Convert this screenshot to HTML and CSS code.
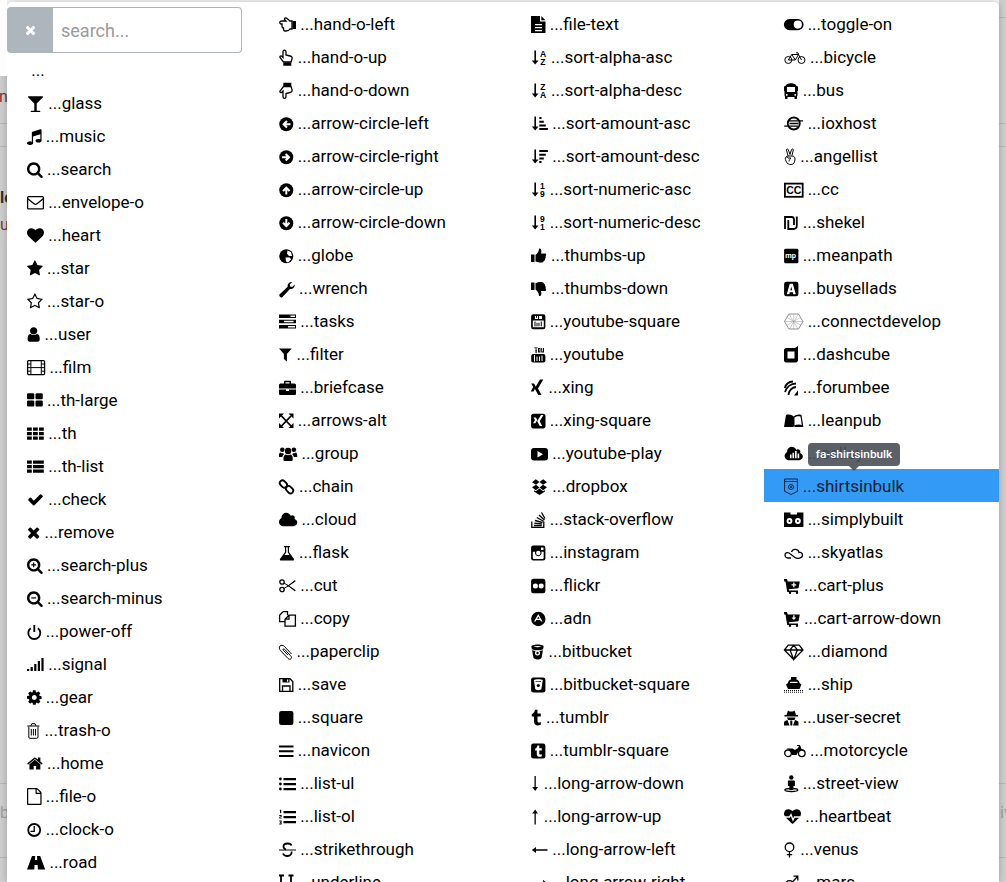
FILE: index.html
```html
<!DOCTYPE html>
<html lang="en">
<head>
  <meta charset="UTF-8" />
  <title>Icon picker</title>
  <link rel="stylesheet" href="styles.css">
</head>
<body>
  <svg class="defs">
    <defs>
      <path id="p-search" d="M1216 832q0-185-131.500-316.500t-316.500-131.500-316.500 131.500-131.500 316.500 131.500 316.500 316.500 131.500 316.500-131.500 131.500-316.500zm512 832q0 52-38 90t-90 38q-54 0-90-38l-343-342q-179 124-399 124-143 0-273.500-55.500t-225-150-150-225-55.500-273.500 55.500-273.500 150-225 225-150 273.500-55.500 273.500 55.500 225 150 150 225 55.500 273.500q0 220-124 399l343 343q37 37 37 90z"/>
      <path id="p-times" d="M1490 1322q0 40-28 68l-136 136q-28 28-68 28t-68-28l-294-294-294 294q-28 28-68 28t-68-28l-136-136q-28-28-28-68t28-68l294-294-294-294q-28-28-28-68t28-68l136-136q28-28 68-28t68 28l294 294 294-294q28-28 68-28t68 28l136 136q28 28 28 68t-28 68l-294 294 294 294q28 28 28 68z"/>
      <path id="p-cloud" d="M1920 1216q0 159-112.500 271.500t-271.500 112.500h-1088q-185 0-316.500-131.500t-131.500-316.500q0-132 71-241.500t187-163.500q-2-28-2-43 0-212 150-362t362-150q158 0 286.500 88t187.500 230q70-62 166-62 106 0 181 75t75 181q0 75-41 138 129 30 213 134.500t84 239.500z"/>
      <path id="p-heart" d="M896 1664q-26 0-44-18l-624-602q-10-8-27.500-26t-55.500-65.500-68-97.500-53.500-121-23.500-138q0-220 127-344t351-124q62 0 126.500 21.500t120 58 95.500 68.500 76 68q36-36 76-68t95.500-68.500 120-58 126.500-21.500q224 0 351 124t127 344q0 221-229 450l-623 600q-18 18-44 18z"/>
      <path id="p-arrow" d="M3.200 9.300l4-4 1.500 1.500-1.500 1.500h4.300v2h-4.300l1.500 1.500-1.500 1.500z"/>
      <path id="p-hand" d="M5 1.200c1-.4 2 .3 2 1.800v3l4 1c2 .5 2.500 1.500 2 3l-1 3h-7.500l-3.500-4.500c-.5-1 .5-2 1.500-1.500l1.500 1.500v-5.500c0-1 .3-1.500 1-1.800z"/>
      <path id="p-thumb" d="M4.500 8c2-1.500 3.500-3.500 3.500-6.500 2-.5 3 1.500 2 5h4c1.500 0 1.500 2 .5 2.500.5 1.500 0 2.500-.5 3 0 1.500-1 2-1.500 2.500-.5 1-1.500 1-2.500 1-2 0-4-.5-5.500-1zM0 7.500h3.500v7.500h-3.500z"/>
      <path id="p-sortarrow" d="M3.400 1.500h1.600v10h2.500l-3.300 4-3.400-4h2.600z"/>
      <g id="p-cart">
        <path d="M0 2h3l.7 2.500h12.100l-1.300 6.700-9.700 1 .2 1.300h9v1.500h-10.800l-1.700-10.500h-1.300z"/>
        <circle cx="6" cy="15.800" r="1.200"/>
        <circle cx="13" cy="15.800" r="1.200"/>
      </g>
    </defs>
  </svg>

  <div class="side side-left">
    <div class="side-white"></div>
    <p class="crumb crumb-n">n</p>
    <hr class="rule rule-a">
    <hr class="rule rule-b">
    <p class="head">le</p>
    <p class="crumb crumb-u">u</p>
    <hr class="rule rule-c">
    <p class="note">b</p>
    <hr class="rule rule-d">
  </div>

  <div class="stage">
    <div class="panel">
      <ul class="col">
        <li class="search">
          <button class="clear" type="button"><svg class="clear-x" viewBox="192 0 1408 1792"><use href="#p-times"/></svg></button>
          <input class="find" type="text" placeholder="search...">
        </li>
        <li class="row"><i class="blank"></i> ...</li>
        <li class="row"><svg class="ic" viewBox="0 0 1792 1792"><path d="M1699 186q0 35-43 78l-632 632v768h320q26 0 45 19t19 45-19 45-45 19h-896q-26 0-45-19t-19-45 19-45 45-19h320v-768l-632-632q-43-43-43-78 0-23 18-36.500t38-17.500 43-4h1408q23 0 43 4t38 17.500 18 36.500z"/></svg> ...glass</li>
        <li class="row"><svg class="ic" viewBox="128 0 1536 1792"><path d="M1664 224v1120q0 50-34 89t-86 60.500-103.500 32-96.500 10.500-96.500-10.500-103.500-32-86-60.500-34-89 34-89 86-60.500 103.500-32 96.500-10.500q105 0 192 39v-537l-768 237v709q0 50-34 89t-86 60.500-103.500 32-96.500 10.500-96.500-10.500-103.500-32-86-60.500-34-89 34-89 86-60.500 103.500-32 96.500-10.500q105 0 192 39v-967q0-31 19-56.500t49-35.500l832-256q12-4 28-4 40 0 68 28t28 68z"/></svg> ...music</li>
        <li class="row"><svg class="ic" viewBox="64 0 1664 1792"><use href="#p-search"/></svg> ...search</li>
        <li class="row"><svg class="ic" viewBox="0 0 17 17"><rect class="ln ln13" x=".6" y="2.600" width="15.800" height="12.300" rx="1"/><path class="ln ln13" d="M.8 4.800l6.200 5c1 .8 2 .8 3 0l6.200-5"/></svg> ...envelope-o</li>
        <li class="row"><svg class="ic" viewBox="0 0 1792 1792"><use href="#p-heart"/></svg> ...heart</li>
        <li class="row"><svg class="ic" viewBox="64 0 1664 1792"><path d="M1728 647q0 22-26 48l-363 354 86 500q1 7 1 20 0 21-10.500 35.500t-30.500 14.500q-19 0-40-12l-449-236-449 236q-22 12-40 12-21 0-31.500-14.500t-10.500-35.500q0-6 2-20l86-500-364-354q-25-27-25-48 0-37 56-46l502-73 225-455q19-41 49-41t49 41l225 455 502 73q56 9 56 46z"/></svg> ...star</li>
        <li class="row"><svg class="ic" viewBox="64 0 1664 1792"><path d="M1201 1004l306-297-422-62-189-382-189 382-422 62 306 297-73 421 378-199 377 199zm527-357q0 22-26 48l-363 354 86 500q1 7 1 20 0 50-41 50-19 0-40-12l-449-236-449 236q-22 12-40 12-21 0-31.500-14.500t-10.500-35.500q0-6 2-20l86-500-364-354q-25-27-25-48 0-37 56-46l502-73 225-455q19-41 49-41t49 41l225 455 502 73q56 9 56 46z"/></svg> ...star-o</li>
        <li class="row"><svg class="ic" viewBox="192 0 1408 1792"><path d="M1536 1399q0 109-62.500 187t-150.500 78h-854q-88 0-150.500-78t-62.500-187q0-85 8.500-160.500t31.500-152 58.500-131 94-89 134.500-34.500q131 128 313 128t313-128q76 0 134.500 34.500t94 89 58.500 131 31.500 152 8.500 160.500zm-256-887q0 159-112.500 271.500t-271.500 112.500-271.500-112.500-112.500-271.500 112.500-271.500 271.500-112.500 271.500 112.500 112.500 271.500z"/></svg> ...user</li>
        <li class="row"><svg class="ic" viewBox="0 0 18.200 17"><rect class="ln ln13" x=".6" y="1.600" width="17" height="14" rx="1"/><path class="ln" d="M3.900 1.600v14M14.300 1.600v14M3.900 8.600h10.400M.6 5h3.300M.6 8.600h3.300M.6 12.200h3.300M14.300 5h3.300M14.300 8.600h3.300M14.300 12.200h3.300"/></svg> ...film</li>
        <li class="row"><svg class="ic" viewBox="64 0 1664 1792"><path d="M832 1024v384q0 52-38 90t-90 38h-512q-52 0-90-38t-38-90v-384q0-52 38-90t90-38h512q52 0 90 38t38 90zm0-768v384q0 52-38 90t-90 38h-512q-52 0-90-38t-38-90v-384q0-52 38-90t90-38h512q52 0 90 38t38 90zm896 768v384q0 52-38 90t-90 38h-512q-52 0-90-38t-38-90v-384q0-52 38-90t90-38h512q52 0 90 38t38 90zm0-768v384q0 52-38 90t-90 38h-512q-52 0-90-38t-38-90v-384q0-52 38-90t90-38h512q52 0 90 38t38 90z"/></svg> ...th-large</li>
        <li class="row"><svg class="ic" viewBox="0 0 17 17"><path d="M0 2.500h4.800v3.200h-4.800zM6 2.500h4.800v3.200h-4.800zM12 2.500h4.800v3.200h-4.800zM0 7h4.800v3.200h-4.800zM6 7h4.800v3.200h-4.800zM12 7h4.800v3.200h-4.800zM0 11.500h4.800v3.200h-4.800zM6 11.500h4.800v3.200h-4.800zM12 11.500h4.800v3.200h-4.800z"/></svg> ...th</li>
        <li class="row"><svg class="ic" viewBox="0 0 17 17"><path d="M0 2.500h4.800v3.200h-4.800zM6 2.500h10.800v3.200h-10.800zM0 7h4.800v3.200h-4.800zM6 7h10.800v3.200h-10.800zM0 11.500h4.800v3.200h-4.800zM6 11.500h10.800v3.200h-10.800z"/></svg> ...th-list</li>
        <li class="row"><svg class="ic" viewBox="0 0 1792 1792"><path d="M1671 566q0 40-28 68l-724 724-136 136q-28 28-68 28t-68-28l-136-136-362-362q-28-28-28-68t28-68l136-136q28-28 68-28t68 28l294 295 656-657q28-28 68-28t68 28l136 136q28 28 28 68z"/></svg> ...check</li>
        <li class="row"><svg class="ic" viewBox="192 0 1408 1792"><use href="#p-times"/></svg> ...remove</li>
        <li class="row"><svg class="ic" viewBox="64 0 1664 1792"><use href="#p-search"/><path d="M704 576h128v192h192v128h-192v192h-128v-192h-192v-128h192z"/></svg> ...search-plus</li>
        <li class="row"><svg class="ic" viewBox="64 0 1664 1792"><use href="#p-search"/><path d="M512 768h512v128h-512z"/></svg> ...search-minus</li>
        <li class="row"><svg class="ic" viewBox="0 0 14.570 17"><path class="ln ln2" d="M3.700 5.200a6 6 0 1 0 7.200 0M7.300 2v7"/></svg> ...power-off</li>
        <li class="row"><svg class="ic" viewBox="0 0 17 17"><path d="M0 13h2.200v2h-2.200zM3.600 11h2.200v4h-2.200zM7.200 8h2.200v7h-2.200zM10.800 5h2.200v10h-2.200zM14.400 2h2.200v13h-2.200z"/></svg> ...signal</li>
        <li class="row"><svg class="ic" viewBox="128 0 1536 1792"><path d="M1152 896q0-106-75-181t-181-75-181 75-75 181 75 181 181 75 181-75 75-181zm512-109v222q0 12-8 23t-20 13l-185 28q-19 54-39 91 35 50 107 138 10 12 10 25t-9 23q-27 37-99 108t-94 71q-12 0-26-9l-138-108q-44 23-91 38-16 136-29 186-7 28-36 28h-222q-14 0-24.500-8.500t-11.500-21.500l-28-184q-49-16-90-37l-141 107q-10 9-25 9-14 0-25-11-126-114-165-168-7-10-7-23 0-12 8-23 15-21 51-66.500t54-70.500q-27-50-41-99l-183-27q-13-2-21-12.500t-8-23.500v-222q0-12 8-23t19-13l186-28q14-46 39-92-40-57-107-138-10-12-10-24 0-10 9-23 26-36 98.500-107.500t94.500-71.500q13 0 26 10l138 107q44-23 91-38 16-136 29-186 7-28 36-28h222q14 0 24.500 8.500t11.500 21.500l28 184q49 16 90 37l142-107q9-9 24-9 13 0 25 10 129 119 165 170 7 8 7 22 0 12-8 23-15 21-51 66.500t-54 70.500q26 50 41 98l183 28q13 2 21 12.500t8 23.500z"/></svg> ...gear</li>
        <li class="row"><svg class="ic" viewBox="0 0 13.300 17"><path class="ln" d="M1.800 4.500v10.500c0 .8.500 1.300 1.200 1.300h6.800c.7 0 1.200-.5 1.200-1.300v-10.500M.3 4h12.200M3.800 4l1-2.300h3.200l1 2.300M4.300 7v6.500M6.400 7v6.500M8.500 7v6.500"/></svg> ...trash-o</li>
        <li class="row"><svg class="ic" viewBox="64 0 1664 1792"><path d="M1472 992v480q0 26-19 45t-45 19h-384v-384h-256v384h-384q-26 0-45-19t-19-45v-480q0-1 .5-3t.5-3l575-474 575 474q1 2 1 6zm223-69l-62 74q-8 9-21 11h-3q-13 0-21-7l-692-577-692 577q-12 8-24 7-13-2-21-11l-62-74q-8-10-7-23.500t11-21.500l719-599q32-26 76-26t76 26l244 204v-195q0-14 9-23t23-9h192q14 0 23 9t9 23v408l219 182q10 8 11 21.500t-7 23.500z"/></svg> ...home</li>
        <li class="row"><svg class="ic" viewBox="128 0 1536 1792"><path d="M1596 380q28 28 48 76t20 88v1152q0 40-28 68t-68 28h-1344q-40 0-68-28t-28-68v-1600q0-40 28-68t68-28h896q40 0 88 20t76 48zm-444-244v376h376q-10-29-22-41l-313-313q-12-12-41-22zm384 1528v-1024h-416q-40 0-68-28t-28-68v-416h-768v1536h1280z"/></svg> ...file-o</li>
        <li class="row"><svg class="ic" viewBox="0 0 14.570 17"><circle class="ln ln2" cx="7.200" cy="9" r="6"/><path d="M7.900 5h-1.300v4.700h-3.100v1.300h4.400z"/></svg> ...clock-o</li>
        <li class="row"><svg class="ic" viewBox="0 0 18.200 17"><path d="M0 15.500l5-13.500h3.200l-.2 4h2.200l-.2-4h3.200l5 13.500h-7.300l-.2-4.500h-3.200l-.2 4.500z"/></svg> ...road</li>
      </ul>

      <ul class="col">
        <li class="row"><svg class="ic" viewBox="0 0 17 17"><path class="ln ln13" d="M.8 6.500c0-1.200 1-1.500 2-1.500h4.200l-1.500-1.500c-.5-1.500 1.500-2 2.500-1l3 2.500h2v8h-2c-1 1.500-2 2-4 2h-1c-1 0-1.500-1-1.500-2v-1c-1 0-1.500-1-1.500-2v-2h-1c-.5 0-1.200-.5-1.200-1.500z"/><path d="M13.500 5h3.500v8h-3.500z"/></svg> ...hand-o-left</li>
        <li class="row"><svg class="ic" viewBox="0 0 14.570 17"><use class="ln ln13" href="#p-hand"/><path d="M4.300 13.500h8v3.300h-8z"/></svg> ...hand-o-up</li>
        <li class="row"><svg class="ic" viewBox="0 0 14.570 17"><g transform="matrix(1 0 0 -1 0 17.500)"><use class="ln ln13" href="#p-hand"/><path d="M4.300 13.500h8v3.300h-8z"/></g></svg> ...hand-o-down</li>
        <li class="row"><svg class="ic" viewBox="0 0 14.570 17"><circle cx="7.300" cy="9.300" r="7"/><use class="wh" href="#p-arrow"/></svg> ...arrow-circle-left</li>
        <li class="row"><svg class="ic" viewBox="0 0 14.570 17"><circle cx="7.300" cy="9.300" r="7"/><use class="wh" href="#p-arrow" transform="rotate(180 7.300 9.300)"/></svg> ...arrow-circle-right</li>
        <li class="row"><svg class="ic" viewBox="0 0 14.570 17"><circle cx="7.300" cy="9.300" r="7"/><use class="wh" href="#p-arrow" transform="rotate(90 7.300 9.300)"/></svg> ...arrow-circle-up</li>
        <li class="row"><svg class="ic" viewBox="0 0 14.570 17"><circle cx="7.300" cy="9.300" r="7"/><use class="wh" href="#p-arrow" transform="rotate(-90 7.300 9.300)"/></svg> ...arrow-circle-down</li>
        <li class="row"><svg class="ic" viewBox="0 0 14.570 17"><circle cx="7.300" cy="9.300" r="7"/><path class="wh" d="M8.500 3.500l3.500 1.500 1 4-3 0-2-2.500zM6.500 10.500l4.500 0 1 2-3 3-2-1z"/></svg> ...globe</li>
        <li class="row"><svg class="ic" viewBox="0 0 15.800 17"><path d="M.4 14.500l8.300-7.800c-.5-2.500 1.500-5 4.500-4.700l-2.500 2.500.5 2 2 .5 2.500-2.500c.3 3-2.200 5-4.700 4.500l-7.800 8.300c-1.200 1-3.500-1-2.800-2.800z"/></svg> ...wrench</li>
        <li class="row"><svg class="ic" viewBox="0 0 17 17"><path d="M0 1.500h17v3.500h-17zM0 6.800h17v3.500h-17zM0 12h17v3.500h-17z"/><path class="wh" d="M11.500 2.500h4.500v1.500h-4.500zM5 7.800h9.500v1.500h-9.500zM9 13h7v1.500h-7z"/></svg> ...tasks</li>
        <li class="row"><svg class="ic" viewBox="0 0 13.300 17"><path d="M0 2.500h12.800l-4.900 5.500v7.500l-3-2.500v-5z"/></svg> ...filter</li>
        <li class="row"><svg class="ic" viewBox="0 0 17 17"><path fill-rule="evenodd" d="M0 6c0-1 1-1.500 2-1.500h3v-1.500c0-.8.500-1.200 1-1.200h5c.5 0 1 .4 1 1.200v1.500h3c1 0 2 .5 2 1.500v3.500h-17zM6.500 3.200v1.300h4v-1.300z"/><path d="M0 10.500h7v1.500h3v-1.500h7v4.500c0 .7-.7 1-1.500 1h-14c-.8 0-1.500-.3-1.500-1z"/></svg> ...briefcase</li>
        <li class="row"><svg class="ic" viewBox="0 0 14.570 17"><path d="M0 1.500h5l-5 5zM14.500 1.500h-5l5 5zM0 16h5l-5-5zM14.500 16h-5l5-5z"/><path class="ln ln2" d="M2.500 4l9.500 10M12 4l-9.500 10"/></svg> ...arrows-alt</li>
        <li class="row"><svg class="ic" viewBox="0 0 18.200 17"><circle cx="3.300" cy="4.700" r="2.300"/><circle cx="14.900" cy="4.700" r="2.300"/><circle cx="9.100" cy="6" r="3.200"/><path d="M4.500 15v-2c0-2 1.500-3.500 2.500-3.500 1 1 3.200 1 4.200 0 1.300 0 2.500 1.500 2.500 3.500v2c0 .7-.7 1-1.700 1h-6c-1 0-1.500-.3-1.500-1zM0 12v-2c0-1.500.7-2.500 1.500-2.500.8.800 1.800 1 2.800.7.300.6.400 1 .7 1.300-1 .5-1.500 1.500-1.600 2.500zM18.200 12v-2c0-1.500-.7-2.500-1.500-2.500-.8.800-1.800 1-2.800.7-.3.6-.4 1-.7 1.300 1 .5 1.500 1.500 1.600 2.500z"/></svg> ...group</li>
        <li class="row"><svg class="ic" viewBox="0 0 15.800 17"><rect class="ln ln2" x=".4" y="3.300" width="8" height="5.400" rx="2.700" transform="rotate(45 4.400 6)"/><rect class="ln ln2" x="6.600" y="9" width="8" height="5.400" rx="2.700" transform="rotate(45 10.600 11.700)"/></svg> ...chain</li>
        <li class="row"><svg class="ic" viewBox="0 0 1920 1792"><use href="#p-cloud"/></svg> ...cloud</li>
        <li class="row"><svg class="ic" viewBox="0 0 15.800 17"><path fill-rule="evenodd" d="M5 2h6v1.200h-1v4.800l5 7c.3.800 0 1.500-1 1.500h-12c-1 0-1.300-.7-1-1.500l5-7v-4.800h-1zM7.200 3.200v5.300l-1.700 2.500h5l-1.700-2.500v-5.300z"/></svg> ...flask</li>
        <li class="row"><svg class="ic" viewBox="0 0 17 17"><circle class="ln ln13" cx="3" cy="5" r="2.200"/><circle class="ln ln13" cx="3" cy="12.500" r="2.200"/><path class="ln" d="M5 6l11.500 7.500M5 11.500l11.500-7.500M8.500 8l7.500 6M8.500 9.500l7.500-6"/></svg> ...cut</li>
        <li class="row"><svg class="ic" viewBox="0 0 17 17"><path class="ln ln13" d="M4 1.700h4.500v3.500M4 1.700l-3.400 3.500v6.500h5.400"/><path class="ln ln13" d="M10 5.200h6.400v11h-10.400v-7zM10 5.200v4h-4"/></svg> ...copy</li>
        <li class="row"><svg class="ic" viewBox="0 0 13.300 17"><path class="ln" d="M12.500 11l-7-7.500c-1.500-1.500-3.500-1.500-4.500-.5s-1 3 .5 4.500l7.500 8c1 1 2.500 1 3 .2.800-1 .5-2-.5-3l-6-6.500c-.5-.5-1-.5-1.300-.2s-.3 .8.200 1.300l4.500 4.800"/></svg> ...paperclip</li>
        <li class="row"><svg class="ic" viewBox="0 0 14.570 17"><path class="ln ln13" d="M.7 2.700h10.300l2.800 2.800v9.800h-13.100zM3.500 15.300v-5.300h7.500v5.300"/><path d="M3.500 2.700h7v3.800h-7z"/><path class="wh" d="M8 3.500h1.200v2.200h-1.200z"/></svg> ...save</li>
        <li class="row"><svg class="ic" viewBox="0 0 14.570 17"><rect x=".1" y="2" width="14.300" height="14" rx="2.200"/></svg> ...square</li>
        <li class="row"><svg class="ic" viewBox="0 0 14.570 17"><path d="M0 3.500h14.500v2h-14.500zM0 8.200h14.500v2h-14.500zM0 13h14.500v2h-14.500z"/></svg> ...navicon</li>
        <li class="row"><svg class="ic" viewBox="0 0 17 17"><circle cx="1.400" cy="4" r="1.400"/><circle cx="1.400" cy="9" r="1.400"/><circle cx="1.400" cy="14" r="1.400"/><path d="M4.500 3h12.500v2.200h-12.500zM4.500 8h12.500v2.200h-12.500zM4.500 13h12.500v2.200h-12.500z"/></svg> ...list-ul</li>
        <li class="row"><svg class="ic" viewBox="0 0 17 17"><path d="M.8 1.800h1.400v3.400h-1zM.3 7h2.300v2h-1.300v.8h1.400v.8h-2.400v-1.800h1.300v-.8h-1.300zM.3 12.500h2.300v3.900h-2.300v-.8h1.300v-.7h-.8v-.7h.8v-.8h-1.300z"/><path d="M4.500 3h12.500v2.200h-12.500zM4.500 8h12.500v2.200h-12.500zM4.500 13h12.500v2.200h-12.500z"/></svg> ...list-ol</li>
        <li class="row"><svg class="ic" viewBox="0 0 17 17"><path class="ln" d="M0 9h17"/><path class="ln ln2" d="M12.500 4.500c-.5-1.500-2-2-4-2-2.500 0-4 1-4 3 0 1.500 1 2.500 2.500 3M12.500 10.500c.5 2-1 4.500-4 4.500-2.500 0-4-1-4.500-2.500"/></svg> ...strikethrough</li>
        <li class="row"><svg class="ic" viewBox="0 0 14.570 17"><path class="ln ln2" d="M0 1.500h5M9.500 1.500h5M2 1.500v6c0 3 2 4.500 5 4.500s5-1.500 5-4.500v-6M0 15.500h14"/></svg> ...underline</li>
      </ul>

      <ul class="col">
        <li class="row"><svg class="ic" viewBox="0 0 14.570 17"><path d="M0 0h9v5.500h5.500v11.500h-14.500zM10.300 0l4.200 4.200h-4.200z"/><path class="wh" d="M4 8h7v1.300h-7zM4 11h7v1.300h-7zM4 14h7v1.300h-7z"/></svg> ...file-text</li>
        <li class="row"><svg class="ic" viewBox="0 0 15.800 17"><use href="#p-sortarrow"/><text class="tiny"><tspan x="9" y="7.800">A</tspan><tspan x="9.200" y="15.800">Z</tspan></text></svg> ...sort-alpha-asc</li>
        <li class="row"><svg class="ic" viewBox="0 0 15.800 17"><use href="#p-sortarrow"/><text class="tiny"><tspan x="9.200" y="7.800">Z</tspan><tspan x="9" y="15.800">A</tspan></text></svg> ...sort-alpha-desc</li>
        <li class="row"><svg class="ic" viewBox="0 0 17 17"><use href="#p-sortarrow"/><path d="M8.300 2h2.200v2h-2.200zM8.300 5.700h4.500v2h-4.500zM8.300 9.400h6.500v2h-6.500zM8.300 13.100h8.600v2h-8.600z"/></svg> ...sort-amount-asc</li>
        <li class="row"><svg class="ic" viewBox="0 0 17 17"><use href="#p-sortarrow"/><path d="M8.300 2h8.600v2h-8.600zM8.300 5.700h6.500v2h-6.500zM8.300 9.400h4.500v2h-4.500zM8.300 13.100h2.200v2h-2.200z"/></svg> ...sort-amount-desc</li>
        <li class="row"><svg class="ic" viewBox="0 0 14.570 17"><use href="#p-sortarrow"/><text class="tiny"><tspan x="9" y="7.800">1</tspan><tspan x="9" y="15.800">9</tspan></text></svg> ...sort-numeric-asc</li>
        <li class="row"><svg class="ic" viewBox="0 0 14.570 17"><use href="#p-sortarrow"/><text class="tiny"><tspan x="9" y="7.800">9</tspan><tspan x="9" y="15.800">1</tspan></text></svg> ...sort-numeric-desc</li>
        <li class="row"><svg class="ic" viewBox="0 0 15.800 17"><use href="#p-thumb"/></svg> ...thumbs-up</li>
        <li class="row"><svg class="ic" viewBox="0 0 15.800 17"><use href="#p-thumb" transform="matrix(1 0 0 -1 0 17.500)"/></svg> ...thumbs-down</li>
        <li class="row"><svg class="ic" viewBox="0 0 14.570 17"><rect x=".1" y="1.300" width="14.300" height="15" rx="2.300"/><path class="wh" d="M4 3h1v1.800l1 0v-1.800h1v3h-3zM8 3h3v3h-3zM1.800 7.500h11v6.800h-11z"/><path d="M3.500 8.500h1v5h-1zM5.500 9.800h1v3.500h-1zM7.500 9.800h1v3.500h-1zM9.800 8.500h1v4.800h-1z"/></svg> ...youtube-square</li>
        <li class="row"><svg class="ic" viewBox="0 0 14.570 17"><path d="M3.500 1h1v3h1v-3h1l-.8 4v2h-1.200v-2zM7 2h2.500v4.500h-2.500zM10.200 2h1v3.500h.8v-3.500h1v4.500h-2.800z"/><path class="wh" d="M8 3h.5v2.500h-.5z"/><rect x=".2" y="8" width="14.200" height="8.500" rx="2"/><path class="wh" d="M3 9h1v6.500h-1zM5.500 10.500h1v4.500h-1zM8 10.500h1v4.500h-1zM10.500 9.500h1v5.500h-1z"/></svg> ...youtube</li>
        <li class="row"><svg class="ic" viewBox="0 0 13.300 17"><path d="M.2 4.500h2.800l2 3.500-2.500 4.500h-2.800l2.500-4.500zM9 .5h3.300l-5.300 9 3.500 6.500h-3.300l-3.500-6.500z"/></svg> ...xing</li>
        <li class="row"><svg class="ic" viewBox="0 0 14.570 17"><path fill-rule="evenodd" d="M2.300 1.800h10c1.200 0 2.200 1 2.200 2.200v10.200c0 1.200-1 2.200-2.200 2.200h-10c-1.200 0-2.200-1-2.200-2.200v-10.200c0-1.200 1-2.200 2.200-2.200zM10 3l-3.800 6.200 2.500 4.800h2.500l-2.500-4.800 3.800-6.200zM2.500 5.500l1.500 2.500-2 3.300h2.300l2-3.300-1.500-2.500z"/></svg> ...xing-square</li>
        <li class="row"><svg class="ic" viewBox="0 0 17 17"><rect x="0" y="3" width="17" height="12.500" rx="3"/><path class="wh" d="M6.500 6l5.500 3.200-5.500 3.300z"/></svg> ...youtube-play</li>
        <li class="row"><svg class="ic" viewBox="0 0 17 17"><path d="M1 4.300l3.800-3 3.700 2.700-3.500 2.800zM16 4.300l-3.800-3-3.700 2.700 3.500 2.800zM1 9.300l3.800 3 3.700-2.700-3.500-2.800zM16 9.300l-3.800 3-3.700-2.700 3.500-2.800zM8.500 10.500l3.700 2.700 1.800-1v1.400l-5.500 3.300-5.500-3.300v-1.400l1.800 1z"/></svg> ...dropbox</li>
        <li class="row"><svg class="ic" viewBox="0 0 14.570 17"><path class="ln ln13" d="M.8 10.500v5.800h12v-5.800M3 14.500h7.800M3.200 12.200l7.700.7M4 9.500l7.500 2M5.800 6.500l6.800 3.700M8 4l5.500 5M10.500 1.500l3.500 6"/></svg> ...stack-overflow</li>
        <li class="row"><svg class="ic" viewBox="0 0 14.570 17"><rect x=".1" y="1.500" width="14.300" height="15" rx="2.300"/><path class="wh" d="M1.800 7.800h2.400a3.300 3.300 0 1 0 6.200 0h2.300v6.300c0 .5-.3.800-.8.800h-9.300c-.5 0-.8-.3-.8-.8zM10 3.500h2.500v2.500h-2.500z"/><circle class="wh" cx="7.300" cy="9" r="2.200"/></svg> ...instagram</li>
        <li class="row"><svg class="ic" viewBox="0 0 14.570 17"><rect x=".1" y="1.700" width="14.300" height="14.500" rx="2.300"/><circle class="wh" cx="4.400" cy="9" r="2.500"/><circle class="wh" cx="10.200" cy="9" r="2.500"/></svg> ...flickr</li>
        <li class="row"><svg class="ic" viewBox="0 0 14.570 17"><circle cx="7.300" cy="9" r="7.200"/><path class="wh" fill-rule="evenodd" d="M7.300 4l4.200 7.500h-1.500l-.8-1.500h-3.800l-.8 1.500h-1.500zM7.300 6.500l-1.200 2.300h2.400z"/></svg> ...adn</li>
        <li class="row"><svg class="ic" viewBox="0 0 13.300 17"><path d="M.3 3c2.700-2 9.700-2 12.400 0l-2.200 12c-2.500 2-5.500 2-8 0z"/><path class="wh" d="M2.500 3.600c2-.8 6-.8 8 0-2 .8-6 .8-8 0zM1 6.300c3 1.300 8 1.300 11 0v1c-3 1-8 1-11 0z"/><circle class="wh" cx="6.500" cy="10" r="2.500"/><circle cx="6.500" cy="10" r="1.200"/></svg> ...bitbucket</li>
        <li class="row"><svg class="ic" viewBox="0 0 14.570 17"><rect x=".1" y="1.500" width="14.300" height="15" rx="2.300"/><path class="wh" d="M2.800 4c2-1 7-1 9 0l-1.500 9.300c-1.800 1.300-4.200 1.300-6 0z"/><path d="M4.500 5c1.500.5 4 .5 5.500 0v.8c-1.500.3-4 .3-5.500 0z"/><circle cx="7.300" cy="9.500" r="1.600"/></svg> ...bitbucket-square</li>
        <li class="row"><svg class="ic" viewBox="0 0 10.900 17"><path d="M4 .8h2.500v3.700h3.300v3h-3.300v4.500c0 1.500 1.500 2 3.300 1v2.800c-3.800 1.500-6.800.2-6.800-3.300v-5h-2.200v-2.500c1.700-.5 2.900-2 3.200-4.200z"/></svg> ...tumblr</li>
        <li class="row"><svg class="ic" viewBox="0 0 14.570 17"><rect x=".1" y="1.500" width="14.300" height="15" rx="2.300"/><path class="wh" d="M6.300 3.500h2v2.700h2.500v2.200h-2.500v3.200c0 1 1 1.300 2.500.7v2.100c-3 1-5 .2-5-2.500v-3.500h-1.600v-1.800c1.300-.4 2-1.300 2.100-3.100z"/></svg> ...tumblr-square</li>
        <li class="row"><svg class="ic" viewBox="0 0 8.500 17"><path d="M3.500 1h1.300v11h2.200l-2.800 4-3-4h2.300z"/></svg> ...long-arrow-down</li>
        <li class="row"><svg class="ic" viewBox="0 0 8.500 17"><path d="M3.500 16.500h1.300v-11h2.200l-2.800-4-3 4h2.300z"/></svg> ...long-arrow-up</li>
        <li class="row"><svg class="ic" viewBox="0 0 17 17"><path d="M16.500 8.300v1.400h-11.500v2.300l-4.200-3 4.200-3v2.300z"/></svg> ...long-arrow-left</li>
        <li class="row"><svg class="ic" viewBox="0 0 17 17"><path d="M.5 8.300v1.400h11.500v2.300l4.200-3-4.200-3v2.300z"/></svg> ...long-arrow-right</li>
      </ul>

      <ul class="col">
        <li class="row"><svg class="ic" viewBox="0 0 19.430 17"><path fill-rule="evenodd" d="M5.500 3h8.500a5.600 5.600 0 0 1 0 11.200h-8.500a5.600 5.600 0 0 1 0-11.200zM13.800 4.500a4.100 4.100 0 1 0 0 8.200 4.100 4.100 0 0 0 0-8.200z"/></svg> ...toggle-on</li>
        <li class="row"><svg class="ic" viewBox="0 0 21.860 17"><circle class="ln" cx="4.300" cy="11" r="3.500"/><circle class="ln" cx="17.500" cy="11" r="3.500"/><path class="ln" d="M4.300 11l3.500-5.500h6.700l3 5.500M7.800 5.500l3.500 5.500h-7M14.500 5.500l-3.200 5.500M12 3.800h2l.5 1.700"/></svg> ...bicycle</li>
        <li class="row"><svg class="ic" viewBox="0 0 14.570 17"><path fill-rule="evenodd" d="M1.500 4c0-1.500 3-2.700 5.500-2.700s5.500 1.200 5.500 2.700c.8 0 1.500.5 1.500 1v4h-.5v4.500c0 .5-.3.800-.5.900v2.100c0 .3-.2.500-.5.500h-1.500c-.3 0-.5-.2-.5-.5v-1.500h-7v1.500c0 .3-.2.500-.5.500h-1.500c-.3 0-.5-.2-.5-.5v-2.100c-.2-.1-.5-.4-.5-.9v-4.500h-.5v-4c0-.5.7-1 1-1zM3 5v5h8v-5zM2.800 12a.9.900 0 1 0 0 1.800.9.900 0 0 0 0-1.800zM11.200 12a.9.900 0 1 0 0 1.800.9.900 0 0 0 0-1.800z"/></svg> ...bus</li>
        <li class="row"><svg class="ic" viewBox="0 0 19.430 17"><circle class="ln ln2" cx="9.800" cy="8.500" r="6"/><path class="ln ln13" d="M5 5.800h14M5.500 8.500h9M.2 11.200h14"/></svg> ...ioxhost</li>
        <li class="row"><svg class="ic" viewBox="0 0 12.140 17"><path class="ln" d="M4 8l-1.500-6c-.2-1.200 1.300-1.500 1.700-.4l1.800 4.900 1.500-4.900c.5-1.100 2-.8 1.800.4l-1.300 5.500M3 8.500c-2 .5-2 2.500-1 4.500 1 3 3 3.500 5 3.500 3 0 4-2.500 4-5.500 0-2-1-3-3-3h-4c-1 0-1 1.500 0 2h3c-1 1-2 2.500-2 3.500"/></svg> ...angellist</li>
        <li class="row"><svg class="ic" viewBox="0 0 19.430 17"><rect class="ln ln2" x=".9" y="2.600" width="17.800" height="13.200"/><text class="cc" x="2.300" y="12.900">CC</text></svg> ...cc</li>
        <li class="row"><svg class="ic" viewBox="0 0 14.570 17"><path class="ln ln2" d="M1 15v-12h6.500c1.500 0 2.500 1 2.500 2.500v5.500M12.800 2.500v9c0 2-1.500 3.500-3.500 3.500h-5v-9"/></svg> ...shekel</li>
        <li class="row"><svg class="ic" viewBox="0 0 14.570 17"><rect x=".1" y="1.700" width="14.300" height="14.500" rx="1.500"/><text class="mp" x="1.300" y="10.800">mp</text></svg> ...meanpath</li>
        <li class="row"><svg class="ic" viewBox="0 0 14.570 17"><rect x=".1" y="1.700" width="14.300" height="14.500" rx="2.300"/><path class="wh" fill-rule="evenodd" d="M5.800 3.800h3l3 10.500h-2.500l-.5-2h-3l-.5 2h-2.500zM7.300 6.500l-.9 3.800h1.800z"/></svg> ...buysellads</li>
        <li class="row"><svg class="ic" viewBox="0 0 19.430 17"><path class="hex hex-in" d="M5 1l9 15M14.500 1l-9 15M.5 8.500h18.500M3 4.500l14 8M16.500 4.500l-14 8M9.700 1v15"/><path class="hex" d="M.5 8.500l4.500-7.500h9.500l4.500 7.500-4.500 7.500h-9.500z"/></svg> ...connectdevelop</li>
        <li class="row"><svg class="ic" viewBox="0 0 14.570 17"><path fill-rule="evenodd" d="M0 4c0-1 1-2 2-2h9l3-2v14c0 1.500-1 2.500-2.500 2.500h-9.500c-1 0-2-1-2-2zM3.500 5.500v7h7v-7z"/></svg> ...dashcube</li>
        <li class="row"><svg class="ic" viewBox="0 0 14.570 17"><path class="ln ln2" d="M.8 9a9 9 0 0 1 8.200-6.500M1 13a12 12 0 0 1 11-8.500M4.500 16a8 8 0 0 1 7.500-8"/><path d="M10 16.500l4-5v5z"/></svg> ...forumbee</li>
        <li class="row"><svg class="ic" viewBox="0 0 19.430 17"><path d="M0 15l2-12c3-1 6 0 7.700 1.500 1.800-1.500 4.800-2.500 7.800-1.500l1.900 12h-19.400z"/><path class="wh" d="M10.500 5.500c1.500-1 3.500-1.500 6-1l1.300 8.500c-2.800-1-5.300-.5-7.300.5zM9.500 14.200h1v.8h-1z"/></svg> ...leanpub</li>
        <li class="row"><svg class="ic" viewBox="-64 0 2048 1792"><use href="#p-cloud"/><path class="wh" d="M560 1000h170v400h-170zM830 820h170v580h-170zM1100 640h170v760h-170zM1370 900h170v500h-170z"/></svg> ...sellsy</li>
        <li class="row on"><svg class="ic" viewBox="0 0 14.570 17"><path class="ln shirt" d="M.6 1h12.800v12.300l-6.400 3.200-6.400-3.200zM.6 3.500h12.800"/><circle class="ln shirt" cx="7" cy="9" r="2.500"/><circle class="shirt-dot" cx="7" cy="9" r="1"/></svg> ...shirtsinbulk<span class="tip">fa-shirtsinbulk</span></li>
        <li class="row"><svg class="ic" viewBox="0 0 19.430 17"><path d="M0 1.500h6.500v2h6.500v-2h6.400v14.500h-19.400z"/><circle class="wh" cx="5.500" cy="10" r="2.900"/><circle class="wh" cx="13.900" cy="10" r="2.900"/><circle cx="5.500" cy="10" r="1"/><circle cx="13.900" cy="10" r="1"/></svg> ...simplybuilt</li>
        <li class="row"><svg class="ic" viewBox="0 0 19.430 17"><path class="ln ln13" d="M1 11c0-2 2-3 4-2l6 4.500c2 1.500 7.500 1 7.500-2.500 0-2.500-2.500-3-3.500-2.500-.5-3.500-6-4.500-7.500-.5M7 14h-3c-2 0-3-1.500-3-3"/></svg> ...skyatlas</li>
        <li class="row"><svg class="ic" viewBox="0 0 15.800 17"><use href="#p-cart"/><path class="wh" d="M9.200 5.500h1.300v1.700h1.700v1.300h-1.700v1.700h-1.300v-1.700h-1.700v-1.300h1.700z"/></svg> ...cart-plus</li>
        <li class="row"><svg class="ic" viewBox="0 0 15.800 17"><use href="#p-cart"/><path class="wh" d="M9.200 5.200h1.300v2.300h1.700l-2.350 2.500-2.350-2.500h1.700z"/></svg> ...cart-arrow-down</li>
        <li class="row"><svg class="ic" viewBox="0 0 19.430 17"><path class="ln ln13" d="M4.200 2.200h11l3.800 4.800-9.300 9.500-9.300-9.500zM.4 7h18.600M6 7l3.700 9.500 3.700-9.500M6 7l3.700-4.800 3.700 4.800"/></svg> ...diamond</li>
        <li class="row"><svg class="ic" viewBox="0 0 19.430 17"><path d="M7 1h5.500v2.500c2 .5 3 2 3 3.500l2 1.500-2 4.500h-11.500l-2-4.500 2-1.500c0-1.500 1-3 3-3.500z"/><path class="wh" d="M6 5.800h7.500v1.200h-7.500z"/><path class="ln dash" d="M0 14.500h19.400M0 16.200h19.400"/></svg> ...ship</li>
        <li class="row"><svg class="ic" viewBox="0 0 14.570 17"><path d="M4 1.500l1.500 1h3.500l1.500-1 1.500 4.500h-9.500zM.5 6h13.500v1.500h-13.500zM3 8.500h8.500l-1 2.500h-6.500zM0 16.500v-3c0-1 1.500-2 3.500-2.500l2 5.500zM14.500 16.500v-3c0-1-1.500-2-3.500-2.500l-2 5.500zM6.300 11.500h2v5h-2z"/></svg> ...user-secret</li>
        <li class="row"><svg class="ic" viewBox="0 0 21.860 17"><circle class="ln ln13" cx="4" cy="11.300" r="3.300"/><circle class="ln ln13" cx="17.800" cy="11.300" r="3.300"/><path d="M2.500 6.500h6l2.500 1.500 3-2 1-2h-2v-1h3l1.500 4 2 .5-4.500 1-2.500 4.500h-4.500l-2-4.500z"/></svg> ...motorcycle</li>
        <li class="row"><svg class="ic" viewBox="0 0 14.570 17"><circle cx="7.300" cy="2.500" r="2.200"/><path d="M4.500 5.500h5.600c.5 0 .8.300.8.800v4.700h-1.500v4h-4v-4h-1.500v-4.700c0-.5.300-.8.600-.8z"/><ellipse class="ln ln13" cx="7.300" cy="15" rx="6.500" ry="1.500"/></svg> ...street-view</li>
        <li class="row"><svg class="ic" viewBox="0 0 17 17"><use href="#p-heart" transform="scale(.0095)"/><path class="ln ln13 wl" d="M1 9h4.500l1.500-2.500 2 5.500 1.500-3h5.500"/></svg> ...heartbeat</li>
        <li class="row"><svg class="ic" viewBox="0 0 12.140 17"><circle class="ln ln13" cx="5.500" cy="6.300" r="4.300"/><path class="ln ln13" d="M5.500 10.500v6M2.800 13.700h5.400"/></svg> ...venus</li>
        <li class="row"><svg class="ic" viewBox="0 0 14.570 17"><circle class="ln ln13" cx="5.500" cy="11" r="4.300"/><path class="ln ln13" d="M8.500 8l5-5.500M9.500 2.200h4.300v4.300"/></svg> ...mars</li>
      </ul>
    </div>
  </div>

  <div class="side side-right">
    <hr class="rule rule-e">
    <hr class="rule rule-f">
    <hr class="rule rule-b">
    <hr class="rule rule-g">
    <p class="note">iv</p>
    <hr class="rule rule-d">
  </div>
</body>
</html>
```
FILE: styles.css
```css
* {
  box-sizing: border-box;
}
html, body {
  margin: 0;
}
body {
  display: flex;
  height: 882px;
  overflow: hidden;
  background: #d0d0d0;
  font-family: Roboto, Arial, sans-serif;
}
.defs {
  display: none;
}

/* page left behind the picker */
.side {
  flex: none;
  width: 7px;
  overflow: hidden;
  background: #d0d0d0;
  color: #a2a2a2;
  font-size: 16px;
}
.side-white {
  position: relative;
  z-index: 2;
  height: 76px;
  background: #fdfdfd;
}
.side p {
  margin: 0;
  white-space: nowrap;
  line-height: 18px;
}
.crumb {
  color: #7d3535;
}
.crumb-n {
  margin-top: 12px !important;
  margin-left: -1px !important;
}
.crumb-u {
  margin-top: 8px !important;
}
.head {
  margin-top: 41px !important;
  color: #2e2e2e;
  font-weight: 700;
  line-height: 20px !important;
}
.note {
  margin-top: 20px !important;
}
.side-right .note {
  margin-left: 1px;
}
.rule {
  height: 1px;
  margin: 0;
  border: 0;
  background: #b9b9b9;
}
.rule-a { margin-top: 17px; }
.rule-b { margin-top: 22px; }
.rule-c { margin-top: 549px; }
.rule-d { margin-top: 35px; }
.rule-e { margin-top: 17px; }
.rule-f { margin-top: 105px; }
.rule-g { margin-top: 636px; }

/* picker */
.stage {
  flex: none;
  width: 992px;
  padding-top: 2px;
  background: #f9f9f9;
}
.panel {
  position: relative;
  z-index: 1;
  display: grid;
  grid-template-columns: 252px 252px 253px 235px;
  height: 880px;
  padding-top: 5px;
  overflow: hidden;
  background: #fff;
  border-radius: 5px 5px 0 0;
  box-shadow: 0 0 8px rgba(0,0,0,0.25);
}
.col {
  list-style: none;
  margin: 0;
  padding: 0;
}
.search {
  display: flex;
  width: 235px;
  height: 46px;
}
.clear {
  flex: none;
  width: 46px;
  padding: 0;
  border: 0;
  border-radius: 4px 0 0 4px;
  background: #adb5bd;
}
.clear-x {
  display: block;
  height: 14px;
  margin: 0 auto;
  fill: #fff;
}
.find {
  flex: 1;
  min-width: 0;
  padding: 0 8px;
  border: 1px solid #adb5bd;
  border-left: 0;
  border-radius: 0 4px 4px 0;
  outline: 0;
  font-family: inherit;
  font-size: 18px;
}
.find::placeholder {
  color: #9a9a9a;
}
.row {
  position: relative;
  height: 33px;
  padding-left: 20px;
  font-size: 17px;
  line-height: 35px;
  color: #000;
  white-space: nowrap;
}
.on {
  background: #339bf5;
  color: #0e1f36;
}
.blank {
  display: inline-block;
  width: 0;
}
.tip {
  position: absolute;
  left: 44px;
  top: -26px;
  width: 92px;
  height: 23px;
  border-radius: 4px;
  background: rgba(73,80,87,0.9);
  color: #fff;
  font-size: 11.8px;
  font-weight: 500;
  line-height: 22px;
  text-align: center;
}
.tip::after {
  content: "";
  position: absolute;
  left: 41px;
  top: 23px;
  border: 5px solid transparent;
  border-bottom: 0;
  border-top-color: rgba(73,80,87,0.9);
}

/* icons */
.ic {
  height: 17px;
  overflow: visible;
  vertical-align: -2.5px;
  fill: #000;
}
.ln {
  fill: none;
  stroke: #000;
  stroke-width: 1;
}
.ln2 {
  stroke-width: 1.8;
}
.ln13 {
  stroke-width: 1.3;
}
.wh {
  fill: #fff;
}
.wl {
  stroke: #fff;
}
.dash {
  stroke-dasharray: 1 1;
}
.shirt {
  stroke: #14243d;
}
.shirt-dot {
  fill: #14243d;
}
.hex {
  fill: none;
  stroke: #777;
  stroke-width: 0.8;
}
.hex-in {
  stroke: #aaa;
  stroke-width: 0.6;
}
.tiny {
  font-family: "Liberation Sans", Arial, sans-serif;
  font-size: 8.5px;
  font-weight: 700;
}
.cc {
  font-family: "Liberation Sans", Arial, sans-serif;
  font-size: 10.5px;
  font-weight: 700;
}
.mp {
  fill: #fff;
  font-family: Roboto, Arial, sans-serif;
  font-size: 7.5px;
  font-weight: 700;
}
```
